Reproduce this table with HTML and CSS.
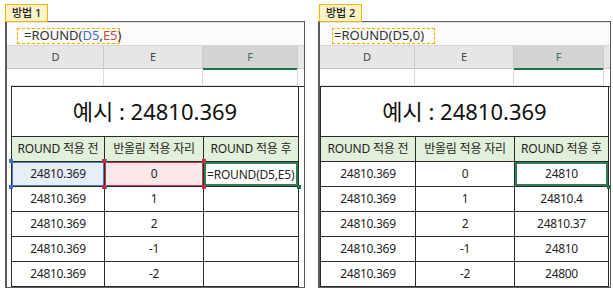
FILE: index.html
```html
<!DOCTYPE html>
<html lang="ko">
<head>
<meta charset="utf-8">
<link rel="stylesheet" href="styles.css">
</head>
<body>
<div class="page">
  <section class="panel p1">
    <div class="tag">방법 1</div>
    <div class="sheet">
      <div class="fbar"><div class="fx">=ROUND(<span class="rd">D5</span>,<span class="re">E5</span>)</div></div>
      <div class="colhdr"><div>D</div><div>E</div><div class="sel">F</div></div>
      <div class="blank"><div></div><div></div><div></div></div>
      <div class="tbl">
        <div class="title">예시 : 24810.369</div>
        <div class="th">ROUND 적용 전</div><div class="th">반올림 적용 자리</div><div class="th">ROUND 적용 후</div>
        <div class="td selD">24810.369<i class="c tl"></i><i class="c tr"></i><i class="c bl"></i><i class="c br"></i></div>
        <div class="td selE">0<i class="c tl"></i><i class="c tr"></i><i class="c bl"></i><i class="c br"></i></div>
        <div class="td selF formula">=ROUND(D5,E5)<i class="c br"></i></div>
        <div class="td">24810.369</div><div class="td">1</div><div class="td"></div>
        <div class="td">24810.369</div><div class="td">2</div><div class="td"></div>
        <div class="td">24810.369</div><div class="td">-1</div><div class="td"></div>
        <div class="td">24810.369</div><div class="td">-2</div><div class="td"></div>
      </div>
    </div>
  </section>
  <section class="panel p2">
    <div class="tag">방법 2</div>
    <div class="sheet">
      <div class="fbar"><div class="fx">=ROUND(D5,0)</div></div>
      <div class="colhdr"><div>D</div><div>E</div><div class="sel">F</div></div>
      <div class="blank"><div></div><div></div><div></div></div>
      <div class="tbl">
        <div class="title">예시 : 24810.369</div>
        <div class="th">ROUND 적용 전</div><div class="th">반올림 적용 자리</div><div class="th">ROUND 적용 후</div>
        <div class="td">24810.369</div><div class="td">0</div><div class="td selF">24810<i class="c br"></i></div>
        <div class="td">24810.369</div><div class="td">1</div><div class="td">24810.4</div>
        <div class="td">24810.369</div><div class="td">2</div><div class="td">24810.37</div>
        <div class="td">24810.369</div><div class="td">-1</div><div class="td">24810</div>
        <div class="td">24810.369</div><div class="td">-2</div><div class="td">24800</div>
      </div>
    </div>
  </section>
</div>
</body>
</html>
```

FILE: styles.css
```css
* { box-sizing: border-box; }
html, body { margin: 0; padding: 0; background: #fff; }
body {
  font-family: "Noto Sans", "Noto Sans CJK KR", sans-serif;
  color: #1f1f1f;
  width: 613px;
  height: 292px;
  overflow: hidden;
}
.page {
  display: flex;
  gap: 13px;
  padding: 4px 0 0 5px;
}
.panel { display: flex; flex-direction: column; align-items: flex-start; }
.p1 { width: 300px; }
.p2 { width: 293px; }
.tag {
  position: relative;
  z-index: 2;
  height: 18px;
  padding: 0 6px;
  border: 1px solid #f3b600;
  background: #fff3c9;
  font-size: 11px;
  line-height: 16px;
  font-weight: 500;
  color: #222;
  white-space: nowrap;
  margin-bottom: -1px;
}
.p2 .tag { margin-left: 1px; }
.sheet {
  width: 100%;
  height: 267px;
  border: 1px solid #5c5c5c;
  border-left-width: 2px;
  background: #fff;
}
.fbar {
  height: 23px;
  background: #fbfbfb;
  border-top: 1px solid #e3e3e3;
  padding-top: 5px;
}
.fx {
  height: 16px;
  border: 1px dashed #f0b000;
  font-size: 13px;
  line-height: 13px;
  color: #333;
  white-space: nowrap;
}
.p1 .fx { width: 103px; margin-left: 10px; padding-left: 6px; }
.p2 .fx { width: 103px; margin-left: 12px; padding-left: 1px; }
.rd { color: #3d6fc5; }
.re { color: #c8474b; }
.colhdr {
  display: grid;
  height: 24px;
  background: #e6e6e6;
  border-top: 1px solid #d6d6d6;
  border-bottom: 1px solid #c6c6c6;
  font-size: 11px;
  color: #444;
  text-align: center;
  line-height: 22px;
}
.colhdr > div { border-right: 1px solid #c9c9c9; }
.colhdr .sel {
  background: #d3d3d3;
  color: #3b6e55;
  border-bottom: 2px solid #217346;
}
.p1 .colhdr { grid-template-columns: 96px 99px 95px; padding-left: 1px; }
.p2 .colhdr { grid-template-columns: 95px 99px 90px; padding-left: 0; }
.blank { display: grid; height: 17px; }
.blank > div { border-right: 1px solid #dadada; border-bottom: 1px solid #e2e2e2; }
.p1 .blank { grid-template-columns: 96px 99px 95px; padding-left: 1px; }
.p2 .blank { grid-template-columns: 95px 99px 90px; }
.tbl {
  display: grid;
  border-top: 1px solid #2a2a2a;
  border-left: 1px solid #2a2a2a;
  font-size: 12px;
  text-align: center;
}
.p1 .tbl { grid-template-columns: 93px 99px 95px; margin-left: 4px; }
.p2 .tbl { grid-template-columns: 95px 99px 94px; margin-left: 0; }
.tbl > div { border-right: 1px solid #2a2a2a; border-bottom: 1px solid #2a2a2a; }
.title {
  grid-column: 1 / 4;
  height: 50px;
  font-size: 22px;
  line-height: 48px;
  color: #111;
}
.th {
  height: 25px;
  line-height: 23px;
  background: #e2efda;
  white-space: nowrap;
  letter-spacing: -0.2px;
}
.td {
  position: relative;
  height: 25px;
  line-height: 23px;
  letter-spacing: -0.3px;
}
.td .c {
  position: absolute;
  width: 4px;
  height: 4px;
  z-index: 3;
}
.c.tl { left: -3px; top: -3px; }
.c.tr { right: -3px; top: -3px; }
.c.bl { left: -3px; bottom: -3px; }
.c.br { right: -3px; bottom: -3px; }
.selD { background: #e6eef9; box-shadow: inset 0 0 0 1px #4a7bd0; }
.selD .c { background: #3f6fc6; }
.selE { background: #fbe9e9; box-shadow: inset 0 0 0 1px #cc3b43; }
.selE .c { background: #c0333a; }
.selF { box-shadow: inset 0 0 0 2px #2f7d4f; }
.selF .c { background: #217346; }
.formula { text-align: left; padding-left: 3px; font-size: 12px; line-height: 26px; white-space: nowrap; letter-spacing: -0.2px; }
```
